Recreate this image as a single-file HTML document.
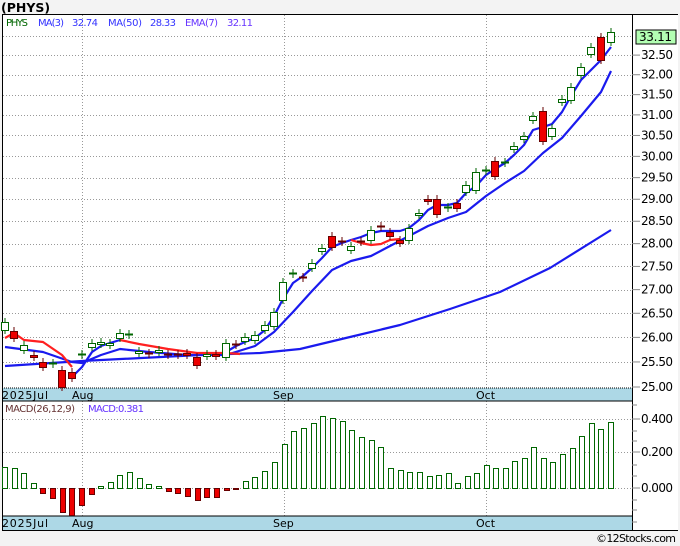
<!DOCTYPE html>
<html><head><meta charset="utf-8"><style>
html,body{margin:0;padding:0;background:#f3f3f3;}
svg{display:block;font-family:"DejaVu Sans","Liberation Sans",sans-serif;}
</style></head><body>
<svg id="c" width="680" height="546" viewBox="0 0 680 546" xmlns="http://www.w3.org/2000/svg">
<rect x="0" y="0" width="680" height="546" fill="#f3f3f3"/>
<rect x="2" y="14" width="676" height="517" fill="#fff"/>
<text x="1" y="12" font-size="12.5" font-weight="bold" fill="#000">(PHYS)</text>
<g id="grid" stroke="#999" stroke-dasharray="1,2" stroke-width="1"></g>
<rect x="2" y="388" width="630" height="13" fill="#add8e6"/>
<rect x="2" y="516" width="630" height="14" fill="#add8e6"/>
<line x1="2" y1="388" x2="632" y2="388" stroke="#000" stroke-dasharray="1,1"/>
<line x1="2" y1="401" x2="632" y2="401" stroke="#000"/>
<line x1="2" y1="516" x2="632" y2="516" stroke="#000"/>
<line x1="2" y1="530.5" x2="678" y2="530.5" stroke="#000"/>
<line x1="2" y1="14.5" x2="678" y2="14.5" stroke="#000"/>
<line x1="2.5" y1="14" x2="2.5" y2="531" stroke="#000"/>
<line x1="632.5" y1="14" x2="632.5" y2="531" stroke="#000"/>
<g font-size="11" fill="#000">
<text x="2" y="399" textLength="46">2025Jul</text><text x="72" y="399">Aug</text><text x="273" y="399">Sep</text><text x="476" y="399">Oct</text>
<text x="2" y="527" textLength="46">2025Jul</text><text x="72" y="527">Aug</text><text x="273" y="527">Sep</text><text x="476" y="527">Oct</text>
</g>
<g font-size="10">
<text x="6" y="26" fill="#006600" textLength="22">PHYS</text>
<text x="38" y="26" fill="#3333ff" textLength="26">MA(3)</text>
<text x="72" y="26" fill="#3333ff" textLength="26">32.74</text>
<text x="108" y="26" fill="#3333ff" textLength="34">MA(50)</text>
<text x="150" y="26" fill="#3333ff" textLength="26">28.33</text>
<text x="185" y="26" fill="#6633ff" textLength="33">EMA(7)</text>
<text x="227" y="26" fill="#6633ff" textLength="26">32.11</text>
<text x="5" y="412" fill="#663333" textLength="70">MACD(26,12,9)</text>
<text x="88" y="412" fill="#6633ff" textLength="56">MACD:0.381</text>
</g>
<g id="axis" font-size="12" fill="#000"></g>
<g id="macd"></g>
<g id="lines" fill="none" stroke-width="2.2" stroke-linejoin="round"></g>
<g id="cand"></g>
<rect x="636" y="30" width="40" height="14" fill="#b3ffb3" stroke="#000"/>
<text x="639" y="41" font-size="12" fill="#000" textLength="33">33.11</text>
<text x="596" y="542" font-size="11" fill="#000" textLength="80">©12Stocks.com</text>
</svg>
<script>
var NS="http://www.w3.org/2000/svg";
function el(p,t,a){var e=document.createElementNS(NS,t);for(var k in a)e.setAttribute(k,a[k]);document.getElementById(p).appendChild(e);return e;}
function Y(p){return 387-1265*(Math.log(p)-Math.log(25));}
var g="grid";
[82,284,486].forEach(function(x){el(g,"line",{x1:x+.5,y1:15,x2:x+.5,y2:388});el(g,"line",{x1:x+.5,y1:401,x2:x+.5,y2:516});});
var lv=[25.5,26,26.5,27,27.5,28,28.5,29,29.5,30,30.5,31,31.5,32,32.5,33];
lv.forEach(function(p){var y=Math.round(Y(p))+.5;el(g,"line",{x1:3,y1:y,x2:632,y2:y});});
[419,452,488].forEach(function(y){el(g,"line",{x1:3,y1:y+.5,x2:632,y2:y+.5});});
[25,25.5,26,26.5,27,27.5,28,28.5,29,29.5,30,30.5,31,31.5,32,32.5].forEach(function(p){var y=Y(p);
el("axis","line",{x1:632,y1:y,x2:640,y2:y,stroke:"#888"});var t=el("axis","text",{x:641,y:y+4,textLength:32});t.textContent=p.toFixed(2);});
[[419,"0.400"],[452,"0.200"],[488,"0.000"]].forEach(function(a){el("axis","line",{x1:632,y1:a[0],x2:640,y2:a[0],stroke:"#888"});var t=el("axis","text",{x:641,y:a[0]+4,textLength:32});t.textContent=a[1];});
[405,431,441,465,476,500,510,522].forEach(function(y){el("axis","line",{x1:632,y1:y,x2:637,y2:y,stroke:"#888"});});
var C=[[5,322,330,"g"],[14,331,338,"r"],[24,345,350,"g"],[34,355,357,"r"],[43,362,367,"r"],[53,363,364,"g"],[62,370,387,"r"],[72,372,378,"r"],[82,354,355,"g"],[92,343,347,"g"],[101,342,344,"g"],[110,343,345,"g"],[120,333,338,"g"],[129,334,335,"g"],[139,351,353,"g"],[149,353,354,"r"],[159,350,352,"g"],[168,354,355,"r"],[178,354,355,"r"],[187,353,355,"r"],[197,357,365,"r"],[207,354,356,"g"],[216,354,356,"r"],[226,343,357,"g"],[236,344,345,"r"],[245,337,341,"g"],[255,335,340,"g"],[265,325,330,"g"],[274,312,326,"g"],[283,282,300,"g"],[293,273,274,"g"],[303,277,278,"r"],[312,263,268,"g"],[322,248,251,"g"],[332,236,247,"r"],[342,241,242,"r"],[351,246,250,"g"],[361,241,242,"r"],[371,230,240,"g"],[381,226,227,"r"],[390,232,236,"r"],[400,240,243,"r"],[409,228,240,"g"],[419,213,215,"g"],[428,199,201,"r"],[437,199,214,"r"],[448,207,208,"g"],[457,203,208,"r"],[466,185,192,"g"],[476,172,190,"g"],[486,170,171,"g"],[495,161,176,"r"],[505,162,163,"g"],[514,146,149,"g"],[524,136,139,"g"],[533,116,120,"g"],[543,111,141,"r"],[552,128,136,"g"],[562,99,102,"g"],[571,87,100,"g"],[581,67,75,"g"],[591,47,54,"g"],[601,37,60,"r"],[611,32,42,"g"]];
C.forEach(function(c){var x=c[0],t=c[1],b=c[2],r=c[3]=="r";var col=r?"#660000":"#006600";
el("cand","line",{x1:x,y1:t-4,x2:x,y2:b+4,stroke:col});
if(b-t<2){el("cand","line",{x1:x-4,y1:t+.5,x2:x+4,y2:t+.5,stroke:col,"stroke-width":2});}
else el("cand","rect",{x:x-3.5,y:t+.5,width:7,height:b-t,fill:r?"#ee0000":"#fff",stroke:col});});
function pl(pts,col){el("lines","polyline",{points:pts,stroke:col});}
pl("5,366 82,361 200,355 260,353 300,349 350,337 400,325 450,309 500,292 550,268 611,230","#1a1aee");
pl("5,347 43,352 72,362 82,363 101,355 120,349 149,352 187,355 226,355 255,346 274,332 293,312 312,291 332,270 351,261 371,256 390,246 409,236 428,226 448,218 466,212 486,196 505,183 524,171 543,153 562,138 581,116 601,92 611,71","#1a1aee");
pl("5,338 14,333 24,340 43,342 62,355 72,367","#ff2020");
pl("120,340 139,344 168,349 197,353 226,353 240,354","#ff2020");
pl("72,377 82,367 92,352 101,346 110,343 120,340","#1a1aee");
pl("226,352 236,346 245,342 255,338 265,330 274,316 283,299 293,283 303,276 312,268 322,258 332,247 342,243 351,240 361,237 371,233 381,231 390,231 400,231 409,228 419,220 428,210 437,205 448,205 457,203 466,193 476,186 486,175 495,169 505,163 514,155 524,145 533,130 543,127 552,124 562,112 571,96 581,80 591,70 601,60 611,47","#1a1aee");
pl("351,240 361,243 371,245 381,244 390,240 400,239","#ff2020");
var M=[[2,467],[12,468],[21,473],[31,483],[40,493],[50,498],[60,512],[69,515],[79,505],[89,494],[98,486],[108,482],[117,475],[127,472],[137,478],[146,484],[156,486],[166,491],[175,493],[185,496],[195,500],[204,497],[214,497],[224,490],[233,489],[243,481],[252,477],[262,471],[272,462],[282,444],[291,431],[301,428],[311,423],[320,416],[330,418],[340,421],[349,430],[359,437],[369,440],[378,447],[388,468],[398,470],[407,472],[417,472],[427,476],[436,475],[446,473],[455,483],[465,476],[474,473],[484,465],[493,468],[503,468],[512,461],[522,458],[531,447],[541,458],[550,462],[560,454],[570,448],[579,436],[589,423],[598,429],[608,422]];
M.forEach(function(m){var x=m[0],y=m[1];if(y<=488){el("macd","rect",{x:x+.5,y:y+.5,width:5,height:Math.max(488-y,1),fill:"#fff",stroke:"#006600"});}
else el("macd","rect",{x:x+.5,y:488.5,width:5,height:y-488,fill:"#ee0000",stroke:"#660000"});});
</script>
</body></html>
